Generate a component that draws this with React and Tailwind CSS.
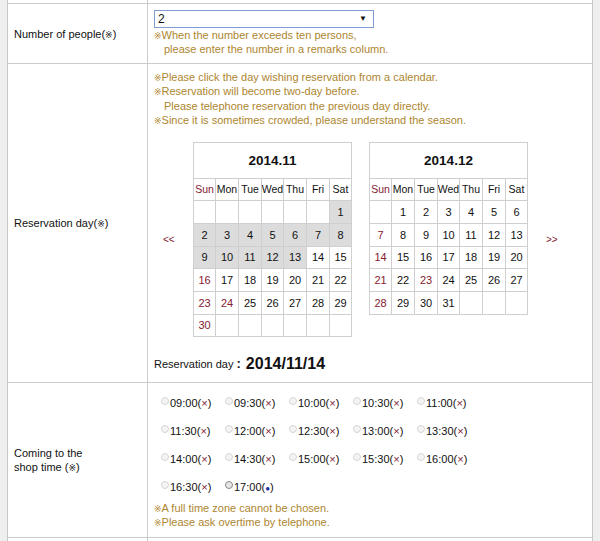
import React from "react";

const days = ["Sun", "Mon", "Tue", "Wed", "Thu", "Fri", "Sat"];
const rowHeights = ["h-[23px]", "h-[23px]", "h-[22px]", "h-[23px]", "h-[23px]", "h-[22px]"];

const november = [
  [null, null, null, null, null, null, 1],
  [2, 3, 4, 5, 6, 7, 8],
  [9, 10, 11, 12, 13, 14, 15],
  [16, 17, 18, 19, 20, 21, 22],
  [23, 24, 25, 26, 27, 28, 29],
  [30, null, null, null, null, null, null],
];

const december = [
  [null, 1, 2, 3, 4, 5, 6],
  [7, 8, 9, 10, 11, 12, 13],
  [14, 15, 16, 17, 18, 19, 20],
  [21, 22, 23, 24, 25, 26, 27],
  [28, 29, 30, 31, null, null, null],
];

const times = [
  "09:00", "09:30", "10:00", "10:30", "11:00",
  "11:30", "12:00", "12:30", "13:00", "13:30",
  "14:00", "14:30", "15:00", "15:30", "16:00",
  "16:30", "17:00",
];

const Mark = () => <span className="text-[9px] leading-none">※</span>;

const Calendar = ({ title, weeks, shadedUntil = 0, holidays = [] }) => {
  return (
    <div className="w-[159px] border-l border-t border-[#cfcfcf] text-[10.5px] text-[#111]">
      <div className="h-[36px] border-r border-b border-[#cfcfcf] flex items-center justify-center font-bold text-[13.5px]">
        {title}
      </div>
      <div className="grid grid-cols-[22px_23px_23px_22px_23px_23px_22px]">
        {days.map((d, i) => (
          <div
            key={d}
            className={`h-[22px] border-r border-b border-[#cfcfcf] flex items-center justify-center ${
              i === 0 ? "text-[#84202f]" : ""
            }`}>
            {d}
          </div>
        ))}
        {weeks.map((week, r) =>
          week.map((day, i) => {
            const shaded = day && day <= shadedUntil;
            const red = day && !shaded && (i === 0 || holidays.includes(day));
            return (
              <div
                key={`${r}-${i}`}
                className={`${rowHeights[r]} border-r border-b border-[#cfcfcf] flex items-center justify-center text-[11px] ${
                  shaded ? "bg-[#dcdcdc]" : ""
                } ${red ? "text-[#84202f]" : ""}`}>
                {day}
              </div>
            );
          })
        )}
      </div>
    </div>
  );
};

const Row = ({ label, height, children }) => {
  return (
    <div className={`flex ${height} border-b border-[#cccccc]`}>
      <div className="w-[140px] shrink-0 border-r border-[#cccccc] pl-[6px] flex items-center text-[11px] leading-[14px] text-[#111]">
        {label}
      </div>
      <div className="flex-1 pl-[6px]">{children}</div>
    </div>
  );
};

const App = () => {
  const note = "text-[#ad862f]";
  return (
    <div className="min-h-[541px] bg-[#efefef] font-['Liberation_Sans','DejaVu_Sans',sans-serif] text-[11px]">
      <div className="ml-[7px] w-[586px] min-h-[541px] bg-white border-l border-r border-[#c8c8c8]">
        <div className="flex h-[4px] border-b border-[#cccccc]">
          <div className="w-[140px] border-r border-[#cccccc]" />
        </div>

        <Row
          label={
            <span>
              Number of people(<Mark />)
            </span>
          }
          height="h-[60px]">
          <div className="pt-[6px]">
            <div className="w-[220px] h-[18px] border border-[#7f9dd4] flex items-center justify-between pl-[3px] pr-[6px] text-[12px] text-[#111]">
              <span>2</span>
              <span className="text-[8px]">▼</span>
            </div>
            <div className={`${note} leading-[14px]`}>
              <div>
                <Mark />When the number exceeds ten persons,
              </div>
              <div className="pl-[10px]">please enter the number in a remarks column.</div>
            </div>
          </div>
        </Row>

        <Row
          label={
            <span>
              Reservation day(<Mark />)
            </span>
          }
          height="h-[319px]">
          <div className="pt-[6px]">
            <div className={`${note} leading-[14.3px]`}>
              <div>
                <Mark />Please click the day wishing reservation from a calendar.
              </div>
              <div>
                <Mark />Reservation will become two-day before.
              </div>
              <div className="pl-[10px]">Please telephone reservation the previous day directly.</div>
              <div>
                <Mark />Since it is sometimes crowded, please understand the season.
              </div>
            </div>
            <div className="mt-[15px] flex items-center">
              <span className="ml-[9px] w-[30px] text-[#84202f] text-[10px]">&lt;&lt;</span>
              <Calendar title="2014.11" weeks={november} shadedUntil={13} holidays={[24]} />
              <div className="ml-[17px] self-start">
                <Calendar title="2014.12" weeks={december} holidays={[23]} />
              </div>
              <span className="ml-[18px] text-[#84202f] text-[10px]">&gt;&gt;</span>
            </div>
            <div className="mt-[17px] h-[20px] flex items-center text-[#111]">
              <span className="text-[11px]">Reservation day</span>
              <span className="ml-[3px] font-bold text-[13px]">:</span>
              <span className="ml-[5px] font-bold text-[16px]">2014/11/14</span>
            </div>
          </div>
        </Row>

        <Row
          label={
            <span>
              Coming to the
              <br />
              shop time (<Mark />)
            </span>
          }
          height="h-[155px]">
          <div className="pt-[6px] pl-[7px]">
            <div className="grid grid-cols-[64px_64px_64px_64px_64px]">
              {times.map((t) => {
                const open = t === "17:00";
                return (
                  <div key={t} className="h-[28px] flex items-center text-[11px] text-[#111]">
                    <span
                      className={`mb-[5px] w-[8px] h-[8px] rounded-full border ${
                        open ? "border-[#8a8a8a] bg-[#e6e6e6]" : "border-[#d6d6d6] bg-[#f4f4f4]"
                      }`}
                    />
                    <span className="ml-[1px]">
                      {t}(
                      {open ? (
                        <span className="text-[#1b2f9e] text-[8px]">●</span>
                      ) : (
                        <span className="text-[#84202f]">×</span>
                      )}
                      )
                    </span>
                  </div>
                );
              })}
            </div>
            <div className={`${note} leading-[14px] -ml-[7px]`}>
              <div>
                <Mark />A full time zone cannot be chosen.
              </div>
              <div>
                <Mark />Please ask overtime by telephone.
              </div>
            </div>
          </div>
        </Row>

        <div className="flex h-[20px]">
          <div className="w-[140px] border-r border-[#cccccc]" />
        </div>
      </div>
    </div>
  );
};

export default App;
